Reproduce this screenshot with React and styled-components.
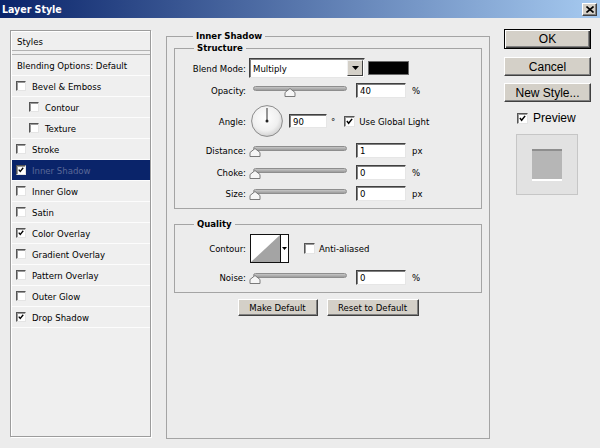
import styled, { createGlobalStyle } from 'styled-components';

const GlobalStyle = createGlobalStyle`
  html, body {
    margin: 0;
    padding: 0;
    background: #ececec;
  }
  body {
    font-family: "DejaVu Sans Condensed", "Liberation Sans", sans-serif;
    font-size: 9.5px;
    color: #000;
  }
`;

const effects = [
  { name: 'Bevel & Emboss' },
  { name: 'Contour', indent: true },
  { name: 'Texture', indent: true },
  { name: 'Stroke' },
  { name: 'Inner Shadow', checked: true, selected: true },
  { name: 'Inner Glow' },
  { name: 'Satin' },
  { name: 'Color Overlay', checked: true },
  { name: 'Gradient Overlay' },
  { name: 'Pattern Overlay' },
  { name: 'Outer Glow' },
  { name: 'Drop Shadow', checked: true },
];

const CheckBox = ({ checked, size = 10 }) => (
  <StyledCheck $size={size}>
    {checked && (
      <svg width={size - 4} height={size - 4} viewBox="0 0 8 8">
        <polyline points="1,3.5 3,6 7,1" fill="none" stroke="#000" strokeWidth="1.7" />
      </svg>
    )}
  </StyledCheck>
);

const Slider = ({ value }) => (
  <SliderBox>
    <Track />
    <Thumb viewBox="0 0 12 9" style={{ left: `${value * 88}px` }}>
      <polygon points="6,0.5 11,4.5 11,8.5 1,8.5 1,4.5" fill="#f6f6f6" stroke="#7a7a7a" strokeWidth="1" />
    </Thumb>
  </SliderBox>
);

const SliderRow = ({ label, value, text, unit, top }) => (
  <Row $h={15} $top={top}>
    <Label>{label}</Label>
    <Slider value={value} />
    <Field $w={50} defaultValue={text} $ml={7} />
    <Unit>{unit}</Unit>
  </Row>
);

const App = () => {
  return (
    <>
      <GlobalStyle />
      <Window>
        <TitleBar>
          <TitleText>Layer Style</TitleText>
          <CloseButton>
            <svg width="8" height="7" viewBox="0 0 8 7">
              <path d="M0.5 0.5 L7.5 6.5 M7.5 0.5 L0.5 6.5" stroke="#000" strokeWidth="1.6" />
            </svg>
          </CloseButton>
        </TitleBar>

        <Body>
          <StylesPanel>
            <HeaderRow>Styles</HeaderRow>
            <BlendingRow>Blending Options: Default</BlendingRow>
            {effects.map((fx) => (
              <EffectRow key={fx.name} $indent={fx.indent} $selected={fx.selected}>
                <CheckBox checked={fx.checked} />
                <EffectName $selected={fx.selected}>{fx.name}</EffectName>
              </EffectRow>
            ))}
          </StylesPanel>

          <OuterGroup>
            <Legend>Inner Shadow</Legend>
            <Group $top={0}>
              <Legend>Structure</Legend>
              <Row $h={20} $top={4}>
                <Label>Blend Mode:</Label>
                <Select>
                  <SelectText>Multiply</SelectText>
                  <DropButton>
                    <svg width="7" height="4" viewBox="0 0 7 4">
                      <polygon points="0,0 7,0 3.5,4" fill="#000" />
                    </svg>
                  </DropButton>
                </Select>
                <Swatch />
              </Row>
              <SliderRow label="Opacity:" value={0.4} text="40" unit="%" top={5} />
              <Row $h={32} $top={7}>
                <Label>Angle:</Label>
                <Dial viewBox="0 0 32 32">
                  <defs>
                    <radialGradient id="dialFill" cx="0.45" cy="0.4" r="0.6">
                      <stop offset="0" stopColor="#ffffff" />
                      <stop offset="0.7" stopColor="#f0f0f0" />
                      <stop offset="1" stopColor="#d2d2d2" />
                    </radialGradient>
                  </defs>
                  <circle cx="16" cy="16" r="15.4" fill="url(#dialFill)" stroke="#8c8c8c" strokeWidth="1" />
                  <line x1="16" y1="16" x2="16" y2="3" stroke="#333" strokeWidth="1" />
                  <circle cx="16" cy="16" r="1.5" fill="#222" />
                </Dial>
                <Field $w={38} $h={14} defaultValue="90" $ml={6} />
                <Unit $ml={4}>°</Unit>
                <CheckGap $ml={9}>
                  <CheckBox checked size={11} />
                </CheckGap>
                <CheckLabel>Use Global Light</CheckLabel>
              </Row>
              <SliderRow label="Distance:" value={0.005} text="1" unit="px" top={6} />
              <SliderRow label="Choke:" value={0} text="0" unit="%" top={7} />
              <SliderRow label="Size:" value={0} text="0" unit="px" top={6} />
            </Group>

            <Group $top={9}>
              <Legend>Quality</Legend>
              <Row $h={29} $top={4}>
                <Label>Contour:</Label>
                <ContourBox>
                  <svg width="29" height="27" viewBox="0 0 29 27">
                    <rect width="29" height="27" fill="#fff" />
                    <polygon points="0,27 29,0 29,27" fill="#a4a4a4" />
                  </svg>
                  <ContourArrow>
                    <svg width="5" height="3" viewBox="0 0 5 3">
                      <polygon points="0,0 5,0 2.5,3" fill="#000" />
                    </svg>
                  </ContourArrow>
                </ContourBox>
                <CheckGap $ml={15}>
                  <CheckBox size={11} />
                </CheckGap>
                <CheckLabel>Anti-aliased</CheckLabel>
              </Row>
              <SliderRow label="Noise:" value={0} text="0" unit="%" top={7} />
            </Group>

            <ButtonRow>
              <SmallButton $w={80}>Make Default</SmallButton>
              <SmallButton $w={92}>Reset to Default</SmallButton>
            </ButtonRow>
          </OuterGroup>

          <SideColumn>
            <BigButton $default>OK</BigButton>
            <BigButton $top={8}>Cancel</BigButton>
            <BigButton $top={7}>New Style...</BigButton>
            <PreviewToggle>
              <CheckBox checked size={11} />
              <PreviewLabel>Preview</PreviewLabel>
            </PreviewToggle>
            <PreviewBox>
              <PreviewSquare />
            </PreviewBox>
          </SideColumn>
        </Body>
      </Window>
    </>
  );
};

const Window = styled.div`
  width: 600px;
  height: 448px;
  display: flex;
  flex-direction: column;
  overflow: hidden;
  background: #ececec;
`;

const TitleBar = styled.div`
  flex: none;
  height: 18px;
  display: flex;
  align-items: center;
  justify-content: space-between;
  padding: 0 3px 0 2px;
  background: linear-gradient(to right, #0a246a, #a6caf0);
`;

const TitleText = styled.span`
  color: #fff;
  font-weight: bold;
  font-size: 10.5px;
  line-height: 18px;
`;

const CloseButton = styled.div`
  width: 15px;
  height: 13px;
  box-sizing: border-box;
  display: flex;
  align-items: center;
  justify-content: center;
  background: #d4d0c8;
  border: 1px solid;
  border-color: #fff #404040 #404040 #fff;
  box-shadow: inset -1px -1px 0 #808080;
`;

const Body = styled.div`
  flex: 1;
  display: flex;
  align-items: flex-start;
  padding: 12px 0 0 10px;
`;

const StylesPanel = styled.div`
  width: 141px;
  height: 407px;
  box-sizing: border-box;
  flex: none;
  background: #efefef;
  border: 1px solid #9c9c9c;
  box-shadow: inset 1px 1px 0 #fff, 1px 1px 0 #fff;
  padding: 0 0 0 1px;
`;

const HeaderRow = styled.div`
  height: 20px;
  box-sizing: border-box;
  display: flex;
  align-items: center;
  padding: 2px 0 0 5px;
  border-bottom: 1px solid #b2b2b2;
`;

const BlendingRow = styled.div`
  margin-top: 3px;
  height: 20px;
  display: flex;
  align-items: center;
  padding-left: 5px;
  border-top: 1px solid #b2b2b2;
  border-bottom: 1px solid #fcfcfc;
`;

const EffectRow = styled.div`
  height: 20px;
  display: flex;
  align-items: center;
  padding-left: ${(p) => (p.$indent ? 17 : 4)}px;
  border-bottom: 1px solid #fcfcfc;
  background: ${(p) => (p.$selected ? '#0a246a' : 'transparent')};
`;

const EffectName = styled.span`
  margin-left: 6px;
  color: ${(p) => (p.$selected ? '#5a6898' : '#000')};
`;

const StyledCheck = styled.span`
  width: ${(p) => p.$size}px;
  height: ${(p) => p.$size}px;
  box-sizing: border-box;
  flex: none;
  display: flex;
  align-items: center;
  justify-content: center;
  background: #fff;
  border: 1px solid;
  border-color: #555 #e4e4e4 #e4e4e4 #555;
  box-shadow: inset 1px 1px 0 #9a9a9a;
`;

const OuterGroup = styled.fieldset`
  flex: none;
  width: 324px;
  height: 409px;
  box-sizing: border-box;
  margin: 0 0 0 15px;
  padding: 0 7px;
  border: 1px solid #a4a4a4;
  min-width: 0;
`;

const Group = styled.fieldset`
  margin: ${(p) => p.$top}px 0 0;
  padding: 0 0 7px;
  border: 1px solid #a4a4a4;
  min-width: 0;
`;

const Legend = styled.legend`
  margin-left: 19px;
  padding: 0 3px;
  font-weight: bold;
  line-height: 12px;
`;

const Row = styled.div`
  display: flex;
  align-items: center;
  height: ${(p) => p.$h}px;
  margin-top: ${(p) => p.$top}px;
`;

const Label = styled.span`
  flex: none;
  width: 71px;
  padding-right: 3px;
  text-align: right;
`;

const Select = styled.div`
  width: 116px;
  height: 20px;
  box-sizing: border-box;
  display: flex;
  align-items: center;
  justify-content: space-between;
  background: #fff;
  border: 1px solid;
  border-color: #404040 #e6e6e6 #e6e6e6 #404040;
  box-shadow: inset 1px 1px 0 #808080;
  padding: 1px 1px 1px 2px;
`;

const SelectText = styled.span`
  padding-left: 1px;
`;

const DropButton = styled.div`
  width: 16px;
  height: 16px;
  box-sizing: border-box;
  display: flex;
  align-items: center;
  justify-content: center;
  background: #d4d0c8;
  border: 1px solid;
  border-color: #f0f0f0 #404040 #404040 #f0f0f0;
`;

const Swatch = styled.div`
  width: 41px;
  height: 14px;
  box-sizing: border-box;
  margin-left: 3px;
  background: #000;
  border: 1px solid #6a6a6a;
`;

const SliderBox = styled.div`
  position: relative;
  flex: none;
  width: 100px;
  height: 15px;
`;

const Track = styled.div`
  position: absolute;
  left: 4px;
  right: 2px;
  top: 3px;
  height: 5px;
  box-sizing: border-box;
  border-radius: 3px;
  border: 1px solid #8e8e8e;
  background: linear-gradient(#c6c6c6, #9c9c9c);
`;

const Thumb = styled.svg`
  position: absolute;
  top: 5px;
  width: 12px;
  height: 9px;
`;

const Field = styled.input`
  flex: none;
  width: ${(p) => p.$w}px;
  height: ${(p) => p.$h || 15}px;
  box-sizing: border-box;
  margin: 0 0 0 ${(p) => p.$ml || 0}px;
  padding: 0 0 0 3px;
  font: inherit;
  color: #000;
  background: #fff;
  border: 1px solid;
  border-color: #404040 #e6e6e6 #e6e6e6 #404040;
  box-shadow: inset 1px 1px 0 #808080;
  outline: none;
`;

const Unit = styled.span`
  margin-left: ${(p) => p.$ml || 6}px;
`;

const Dial = styled.svg`
  flex: none;
  width: 32px;
  height: 32px;
  margin-left: 2px;
`;

const CheckGap = styled.span`
  display: flex;
  margin-left: ${(p) => p.$ml}px;
`;

const CheckLabel = styled.span`
  margin-left: 4px;
`;

const ContourBox = styled.div`
  flex: none;
  display: flex;
  width: 39px;
  height: 29px;
  box-sizing: border-box;
  margin-left: 1px;
  border: 1px solid #111;
  background: #fff;
`;

const ContourArrow = styled.div`
  flex: 1;
  display: flex;
  align-items: center;
  justify-content: center;
  border-left: 1px solid #111;
`;

const ButtonRow = styled.div`
  display: flex;
  justify-content: center;
  gap: 9px;
  margin-top: 6px;
`;

const SmallButton = styled.button`
  width: ${(p) => p.$w}px;
  height: 17px;
  box-sizing: border-box;
  padding: 0;
  font: inherit;
  color: #000;
  background: #d4d0c8;
  border: 1px solid;
  border-color: #fff #404040 #404040 #fff;
  box-shadow: inset -1px -1px 0 #808080;
`;

const SideColumn = styled.div`
  flex: none;
  width: 87px;
  margin: -1px 0 0 14px;
  display: flex;
  flex-direction: column;
`;

const BigButton = styled.button`
  height: ${(p) => (p.$default ? 20 : 19)}px;
  box-sizing: border-box;
  margin-top: ${(p) => p.$top || 0}px;
  padding: 0;
  font-family: "Liberation Sans", Arial, sans-serif;
  font-size: 12px;
  color: #000;
  background: #d4d0c8;
  border: 1px solid;
  border-color: ${(p) => (p.$default ? '#000' : '#fff #404040 #404040 #fff')};
  box-shadow: ${(p) =>
    p.$default
      ? 'inset 1px 1px 0 #fff, inset -1px -1px 0 #404040, inset -2px -2px 0 #808080'
      : 'inset -1px -1px 0 #808080'};
`;

const PreviewToggle = styled.div`
  display: flex;
  align-items: center;
  margin: 9px 0 0 13px;
`;

const PreviewLabel = styled.span`
  margin-left: 5px;
  font-family: "Liberation Sans", Arial, sans-serif;
  font-size: 12px;
`;

const PreviewBox = styled.div`
  width: 62px;
  height: 61px;
  box-sizing: border-box;
  margin: 9px 0 0 12px;
  display: flex;
  align-items: center;
  justify-content: center;
  background: #e2e2e2;
  border: 1px solid #c6c6c6;
`;

const PreviewSquare = styled.div`
  width: 30px;
  height: 32px;
  box-sizing: border-box;
  background: #b6b6b6;
  border-top: 2px solid #8e8e8e;
  border-bottom: 2px solid #fff;
`;

export default App;
